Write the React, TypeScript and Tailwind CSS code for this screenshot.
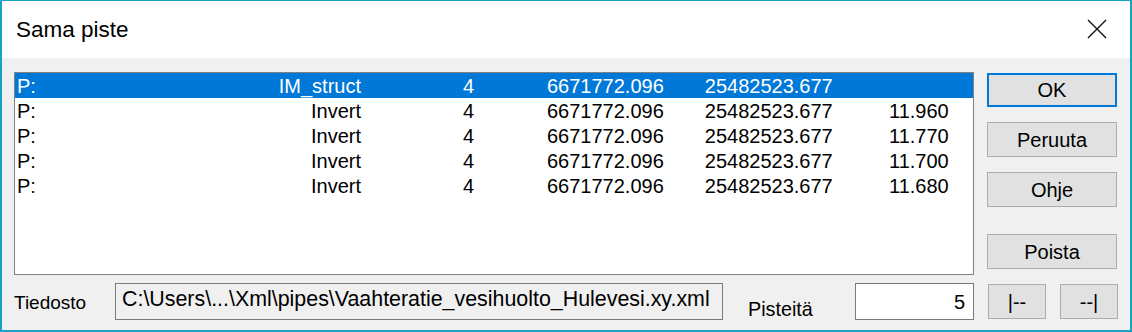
const rows = [
  { name: "IM_struct", n: "4", x: "6671772.096", y: "25482523.677", z: "" },
  { name: "Invert", n: "4", x: "6671772.096", y: "25482523.677", z: "11.960" },
  { name: "Invert", n: "4", x: "6671772.096", y: "25482523.677", z: "11.770" },
  { name: "Invert", n: "4", x: "6671772.096", y: "25482523.677", z: "11.700" },
  { name: "Invert", n: "4", x: "6671772.096", y: "25482523.677", z: "11.680" },
];

function Btn({ label, active, className }: { label: string; active?: boolean; className?: string }) {
  return (
    <button
      className={
        "flex items-center justify-center bg-[#e1e1e1] text-[20px] text-black " +
        (active ? "border-2 border-[#0078d7] " : "border border-[#adadad] ") +
        (className ?? "")
      }
    >
      {label}
    </button>
  );
}

export default function App() {
  return (
    <div
      className="flex h-[332px] w-[1132px] flex-col border-x-2 border-b-2 border-t border-[#18a2c4] bg-[#f0f0f0] text-black"
      style={{ fontFamily: '"Liberation Sans", Arial, sans-serif' }}
    >
      <div className="flex h-[57px] shrink-0 items-center justify-between bg-white pl-[14px] pr-[23px]">
        <span className="text-[22.5px]">Sama piste</span>
        <svg width="20" height="20" viewBox="0 0 20 20" className="mt-[-1px]">
          <path d="M1 1 L19 19 M19 1 L1 19" stroke="#111" strokeWidth="1.4" fill="none" />
        </svg>
      </div>

      <div className="flex flex-1 flex-col px-[12px] pt-[14px]">
        <div className="flex">
          <div className="h-[203px] w-[960px] border border-[#828282] bg-white text-[20px]">
            {rows.map((r, i) => (
              <div
                key={i}
                className={
                  "flex h-[25px] items-center leading-none " +
                  (i === 0 ? "bg-[#0078d7] text-white" : "")
                }
              >
                <span className="w-[80px] pl-[2px]">P:</span>
                <span className="w-[266px] text-right">{r.name}</span>
                <span className="w-[113px] text-right">{r.n}</span>
                <span className="ml-[73px]">{r.x}</span>
                <span className="ml-[41px]">{r.y}</span>
                <span className="w-[116px] text-right">{r.z}</span>
              </div>
            ))}
          </div>

          <div className="ml-[13px] flex w-[130px] flex-col">
            <Btn label="OK" active className="mt-[1px] h-[34px]" />
            <Btn label="Peruuta" className="mt-[15px] h-[35px]" />
            <Btn label="Ohje" className="mt-[15px] h-[35px]" />
            <Btn label="Poista" className="mt-[27px] h-[35px]" />
          </div>
        </div>

        <div className="mt-[8px] flex items-start">
          <span className="mt-[10px] w-[101px] text-[19px] leading-none">Tiedosto</span>
          <div className="flex h-[37px] w-[608px] items-start border border-[#7a7a7a] bg-[#f0f0f0] pl-[6px] pt-[3px] text-[21.4px] leading-[24px]">
            C:\Users\...\Xml\pipes\Vaahteratie_vesihuolto_Hulevesi.xy.xml
          </div>
          <span className="ml-[25px] mt-[17px] w-[107px] text-[19.8px] leading-none">Pisteitä</span>
          <div className="flex h-[37px] w-[119px] items-center justify-end border border-[#7a7a7a] bg-white pr-[8px] text-[20px] leading-none">
            5
          </div>
          <Btn label="|--" className="ml-[14px] mt-[1px] h-[35px] w-[58px]" />
          <Btn label="--|" className="ml-[14px] mt-[1px] h-[35px] w-[58px]" />
        </div>
      </div>
    </div>
  );
}
